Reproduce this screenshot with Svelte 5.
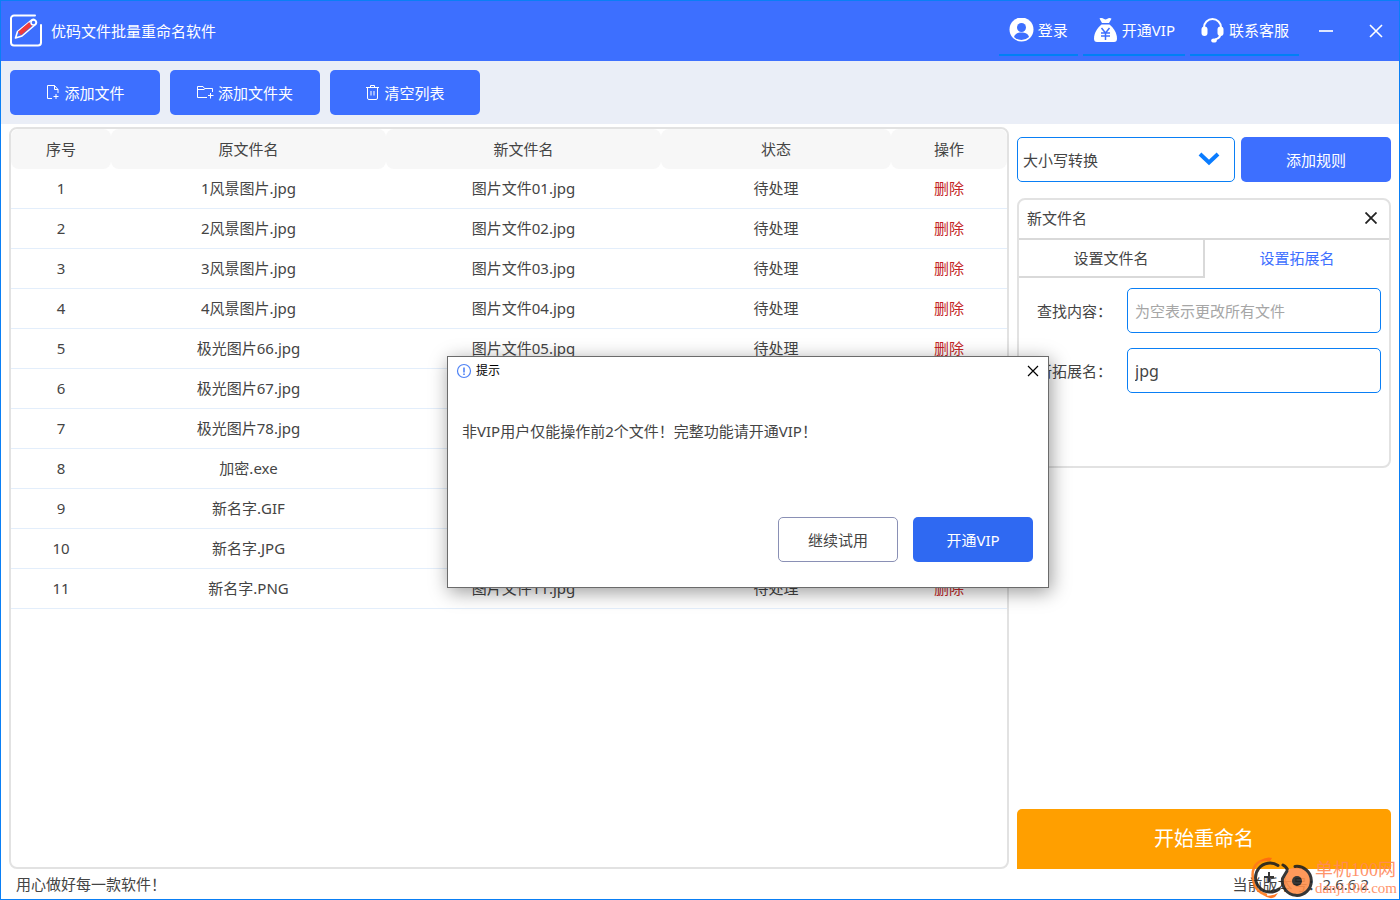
<script>
	const names = [
		'1风景图片.jpg',
		'2风景图片.jpg',
		'3风景图片.jpg',
		'4风景图片.jpg',
		'极光图片66.jpg',
		'极光图片67.jpg',
		'极光图片78.jpg',
		'加密.exe',
		'新名字.GIF',
		'新名字.JPG',
		'新名字.PNG'
	];

	let files = names.map((name, i) => ({
		id: i + 1,
		name,
		newName: `图片文件${String(i + 1).padStart(2, '0')}.jpg`,
		status: '待处理'
	}));

	let rule = '大小写转换';
	let tab = 'ext';
	let search = '';
	let extension = 'jpg';
	let showRule = true;
	let showDialog = true;

	const removeFile = (id) => {
		files = files.filter((file) => file.id !== id);
	};

	const clearFiles = () => {
		files = [];
	};
</script>

<div class="window">
	<header>
		<svg class="logo" width="34" height="34" viewBox="0 0 34 34" fill="none" stroke="#fff" stroke-linecap="round">
			<path d="M26 1.500H5a3 3 0 0 0-3 3v24a3 3 0 0 0 3 3h24a3 3 0 0 0 3-3V11" stroke-width="2" />
			<path d="M6.500 24l2-6.500L22 6.500a3 3 0 0 1 4.500 4L13 22z" stroke-width="1.600" stroke-linejoin="round" />
			<path d="M10.500 19.500L21.500 10" stroke="#f03a3a" stroke-width="4.500" stroke-linecap="butt" />
			<circle cx="24.500" cy="8.500" r="2.500" fill="#3d6fff" stroke-width="1.500" />
		</svg>
		<h1>优码文件批量重命名软件</h1>
		<nav>
			<a href="#login">
				<svg width="25" height="25" viewBox="0 0 25 25">
					<circle cx="12.500" cy="11.500" r="12" fill="#fff" />
					<circle cx="12.500" cy="9.500" r="4.500" fill="#3d6fff" />
					<path d="M5 19c1-3.400 4-4.500 7.500-4.500S19 15.600 20 19a11 11 0 0 1-15 0z" fill="#3d6fff" />
				</svg>
				登录
			</a>
			<a href="#vip">
				<svg width="25" height="25" viewBox="0 0 25 25">
					<path d="M6.500.500c2-1 3.500-.3 4.500.500 1 .6 2 .6 3 0 1.500-1 3-1.300 4.500-.300L16 5H9z" fill="#fff" />
					<path d="M8.500 6.500h8c4.500 3.500 7.500 9 7.500 14 0 2.500-1 3.500-3 3.500H4c-2 0-3-1-3-3.500 0-5 3-10.500 7.500-14z" fill="#fff" />
					<path d="M8.500 10l4 5 4-5M12.500 15v7M8 15h9M8 18h9" fill="none" stroke="#3d6fff" stroke-width="1.500" />
				</svg>
				开通VIP
			</a>
			<a href="#service">
				<svg width="25" height="25" viewBox="0 0 25 25" fill="none">
					<path d="M4 11V9.500a8.500 8.500 0 0 1 17 0V14c0 4-2 6.500-6 7.500" stroke="#fff" stroke-width="2" />
					<rect x="1.500" y="8.500" width="6" height="9.500" rx="3" fill="#fff" />
					<rect x="17.500" y="8.500" width="6" height="9.500" rx="3" fill="#fff" />
					<ellipse cx="14" cy="22.500" rx="2.800" ry="2" fill="#fff" />
				</svg>
				联系客服
			</a>
		</nav>
		<div class="controls">
			<button aria-label="最小化">
				<svg width="14" height="14" viewBox="0 0 14 14" stroke="#dfe7ff" stroke-width="2"><path d="M0 7h14" /></svg>
			</button>
			<button aria-label="关闭">
				<svg width="14" height="14" viewBox="0 0 14 14" stroke="#fff" stroke-width="1.600"><path d="M1 1l12 12M13 1L1 13" /></svg>
			</button>
		</div>
	</header>

	<div class="toolbar">
		<button class="primary">
			<svg width="15" height="16" viewBox="0 0 15 16" fill="none" stroke="#fff">
				<path d="M7 13.500H2.500v-13h7l3.500 4V8M9.500.500v4H13M11 9v5M8.500 11.500h5" />
			</svg>
			添加文件
		</button>
		<button class="primary">
			<svg width="17" height="16" viewBox="0 0 17 16" fill="none" stroke="#fff">
				<path d="M10 12.500H.5v-11H6l1.500 2h8V7M.5 4.500h7M13.500 8v5.500M11 10.500h5.500" />
			</svg>
			添加文件夹
		</button>
		<button class="primary" on:click={clearFiles}>
			<svg width="15" height="16" viewBox="0 0 15 16" fill="none" stroke="#fff">
				<path d="M1 2.500h13M5.500 2.500v-2h4v2M2.500 3v10q0 1.500 1.500 1.500h7q1.500 0 1.500-1.500V3M6 6v4.500M9 6v4.500" />
			</svg>
			清空列表
		</button>
	</div>

	<main>
		<section class="list">
			<table>
				<colgroup>
					<col class="col-id" />
					<col />
					<col />
					<col class="col-status" />
					<col class="col-action" />
				</colgroup>
				<thead>
					<tr>
						<th>序号</th>
						<th>原文件名</th>
						<th>新文件名</th>
						<th>状态</th>
						<th>操作</th>
					</tr>
				</thead>
				<tbody>
					{#each files as file (file.id)}
						<tr>
							<td>{file.id}</td>
							<td>{file.name}</td>
							<td>{file.newName}</td>
							<td>{file.status}</td>
							<td><button class="delete" on:click={() => removeFile(file.id)}>删除</button></td>
						</tr>
					{/each}
				</tbody>
			</table>
		</section>

		<aside>
			<div class="rule-picker">
				<div class="select">
					<select aria-label="规则" bind:value={rule}>
						<option>大小写转换</option>
						<option>新文件名</option>
					</select>
					<svg width="22" height="14" viewBox="0 0 22 14" fill="none" stroke="#0a7cff" stroke-width="4"><path d="M2 2l9 8.500L20 2" /></svg>
				</div>
				<button class="primary" on:click={() => (showRule = true)}>添加规则</button>
			</div>

			{#if showRule}
				<div class="rule">
					<div class="rule-title">
						<h2>新文件名</h2>
						<button aria-label="移除规则" on:click={() => (showRule = false)}>
							<svg width="12" height="12" viewBox="0 0 12 12" stroke="#222" stroke-width="1.800"><path d="M.5.500l11 11M11.500.500l-11 11" /></svg>
						</button>
					</div>
					<div class="tabs">
						<button class:active={tab === 'name'} on:click={() => (tab = 'name')}>设置文件名</button>
						<button class:active={tab === 'ext'} on:click={() => (tab = 'ext')}>设置拓展名</button>
					</div>
					<div class="fields">
						<label for="search">查找内容：</label>
						<input id="search" type="text" placeholder="为空表示更改所有文件" bind:value={search} />
						<label for="extension">新拓展名：</label>
						<input id="extension" type="text" bind:value={extension} />
					</div>
				</div>
			{/if}

			<button class="start">开始重命名</button>
		</aside>
	</main>

	<footer>
		<span>用心做好每一款软件！</span>
		<span>当前版本号：2.6.6.2</span>
	</footer>

	<div class="site-mark">
		<svg width="66" height="42" viewBox="0 0 66 42" fill="none">
			<path d="M19 3C8 2 2 11 4 22c1 8 6 14 14 16" stroke="#ff7a1a" stroke-width="2.500" />
			<path d="M11 4q6-5 12-3l-2 3q-5-1-10 0zM14 38q8 2 15-2l-3 4q-5 3-12-2z" fill="#ff6a10" />
			<path d="M29 8.500A14.500 14.500 0 1 0 30 32M34 8q4 2 5 6" stroke="#222" stroke-width="3" stroke-linecap="round" />
			<path d="M20 15v10M15 20h10" stroke="#222" stroke-width="2" />
			<circle cx="48" cy="24" r="14" fill="#ff8f4a" />
			<path d="M46 9.500a14.500 14.500 0 1 1-12.500 12L38 14" stroke="#222" stroke-width="3" stroke-linecap="round" />
			<circle cx="48" cy="24" r="5" fill="#222" />
		</svg>
		<div>
			<p class="site-name">单机100网</p>
			<p class="site-url">danji100.com</p>
		</div>
	</div>

	{#if showDialog}
		<div class="dialog" role="dialog" aria-labelledby="dialog-title">
			<div class="dialog-title">
				<svg width="16" height="16" viewBox="0 0 16 16" fill="none" stroke="#4f83f5">
					<circle cx="8" cy="8" r="6.500" stroke-width="1.200" />
					<path d="M8 4.500v5M8 10.500v1.500" stroke-width="1.600" />
				</svg>
				<h2 id="dialog-title">提示</h2>
				<button aria-label="关闭提示" on:click={() => (showDialog = false)}>
					<svg width="12" height="12" viewBox="0 0 12 12" stroke="#000" stroke-width="1.200"><path d="M1 1l10 10M11 1L1 11" /></svg>
				</button>
			</div>
			<p class="message">非VIP用户仅能操作前2个文件！完整功能请开通VIP！</p>
			<div class="dialog-buttons">
				<button class="trial" on:click={() => (showDialog = false)}>继续试用</button>
				<button class="vip">开通VIP</button>
			</div>
		</div>
	{/if}
</div>

<style>
	:global(body) {
		margin: 0;
	}

	.window,
	.window * {
		box-sizing: border-box;
	}

	.window {
		position: relative;
		display: flex;
		flex-direction: column;
		min-height: 100vh;
		border: 1px solid #0a7ff5;
		background: #fff;
		color: #444;
		font-family: "Noto Sans", "Noto Sans CJK SC", sans-serif;
		font-size: 15px;
		line-height: 20px;
	}

	button,
	input,
	select {
		margin: 0;
		padding: 0;
		border: none;
		background: none;
		color: inherit;
		font: inherit;
	}

	button {
		display: flex;
		align-items: center;
		justify-content: center;
		cursor: pointer;
	}

	h1,
	h2,
	p {
		margin: 0;
		font-size: 15px;
		font-weight: 400;
	}

	svg {
		flex: none;
	}

	header {
		display: flex;
		align-items: center;
		height: 60px;
		padding-left: 8px;
		background: #3d6fff;
		color: #fff;
	}

	h1 {
		flex: 1;
		margin-left: 8px;
	}

	nav {
		display: flex;
		gap: 5px;
	}

	nav a {
		display: flex;
		align-items: center;
		gap: 4px;
		height: 50px;
		padding: 0 10px;
		border-bottom: 2px solid #0080f5;
		color: #fff;
		text-decoration: none;
	}

	.controls {
		display: flex;
		gap: 4px;
		margin-left: 4px;
	}

	.controls button {
		width: 46px;
		height: 46px;
	}

	.toolbar {
		display: flex;
		gap: 10px;
		padding: 9px;
		background: #eaeef7;
	}

	.primary {
		gap: 4px;
		width: 150px;
		height: 45px;
		border-radius: 5px;
		background: #3d6fff;
		color: #fff;
	}

	main {
		flex: 1;
		display: flex;
		gap: 8px;
		padding: 3px 8px 0;
	}

	.list {
		flex: 1;
		border: 2px solid #e2e2e2;
		border-radius: 8px;
	}

	table {
		width: 100%;
		table-layout: fixed;
		border-collapse: separate;
		border-spacing: 0;
		text-align: center;
	}

	.col-id {
		width: 100px;
	}

	.col-status {
		width: 230px;
	}

	.col-action {
		width: 116px;
	}

	th,
	td {
		height: 40px;
		padding: 0;
		font-weight: 400;
	}

	th {
		border-radius: 8px;
		background: #f7f7f7;
	}

	td {
		padding-bottom: 1px;
		border-bottom: 1px solid #e3eefb;
	}

	.delete {
		margin: 0 auto;
		color: #c42626;
	}

	aside {
		display: flex;
		flex-direction: column;
		width: 374px;
		padding-top: 10px;
	}

	.rule-picker {
		display: flex;
		gap: 6px;
		margin-bottom: 16px;
	}

	.select {
		position: relative;
		flex: 1;
	}

	.select svg {
		position: absolute;
		top: 15px;
		right: 15px;
		pointer-events: none;
	}

	select,
	input {
		width: 100%;
		height: 45px;
		border: 1px solid #0a7ff5;
		border-radius: 5px;
		background: #fff;
	}

	select {
		appearance: none;
		padding: 0 5px;
	}

	input {
		padding: 0 7px;
		font-size: 16px;
	}

	input::placeholder {
		color: #a6a6a6;
		font-size: 15px;
	}

	.rule {
		height: 270px;
		border: 2px solid #e2e2e2;
		border-radius: 8px;
	}

	.rule-title {
		display: flex;
		align-items: center;
		justify-content: space-between;
		height: 40px;
		padding: 0 8px 2px;
		border-bottom: 2px solid #d9d9d9;
	}

	.rule-title button {
		width: 20px;
		height: 20px;
	}

	.tabs {
		display: flex;
	}

	.tabs button {
		flex: 1;
		height: 38px;
		border-right: 2px solid #d9d9d9;
		border-bottom: 2px solid #d9d9d9;
	}

	.tabs button:last-child {
		border-right: none;
	}

	.tabs .active {
		border-bottom-color: transparent;
		color: #3d6fff;
	}

	.fields {
		display: grid;
		grid-template-columns: 90px 1fr;
		align-items: center;
		row-gap: 15px;
		padding: 10px 8px 0 18px;
	}

	.start {
		height: 60px;
		margin-top: auto;
		border-radius: 5px 5px 0 0;
		background: #ff9f00;
		color: #fff;
		font-size: 20px;
	}

	footer {
		display: flex;
		justify-content: space-between;
		height: 30px;
		padding: 5px 30px 5px 15px;
	}

	.site-mark {
		position: absolute;
		right: 2px;
		bottom: 0;
		display: flex;
		align-items: center;
		color: #ff8a5c;
		font-family: "Liberation Serif", "Noto Sans CJK SC", serif;
		opacity: 0.9;
	}

	.site-name {
		font-size: 18px;
		line-height: 20px;
	}

	.site-url {
		font-size: 15px;
		line-height: 16px;
	}

	.dialog {
		position: absolute;
		top: 355px;
		left: 446px;
		width: 602px;
		height: 232px;
		border: 1px solid #6b6b6b;
		background: #fff;
		box-shadow: 2px 4px 18px rgba(0, 0, 0, 0.4);
	}

	.dialog-title {
		display: flex;
		align-items: center;
		height: 28px;
		padding-left: 8px;
		color: #000;
	}

	.dialog-title h2 {
		flex: 1;
		margin-left: 4px;
		font-size: 12px;
	}

	.dialog-title button {
		width: 30px;
		height: 28px;
	}

	.message {
		padding: 36px 14px 0;
	}

	.dialog-buttons {
		display: flex;
		justify-content: flex-end;
		gap: 15px;
		padding: 76px 15px 0;
	}

	.dialog-buttons button {
		width: 120px;
		height: 45px;
		border-radius: 5px;
	}

	.dialog-buttons .trial {
		border: 1px solid #8a90b5;
	}

	.dialog-buttons .vip {
		background: #2f69f2;
		color: #fff;
	}
</style>
